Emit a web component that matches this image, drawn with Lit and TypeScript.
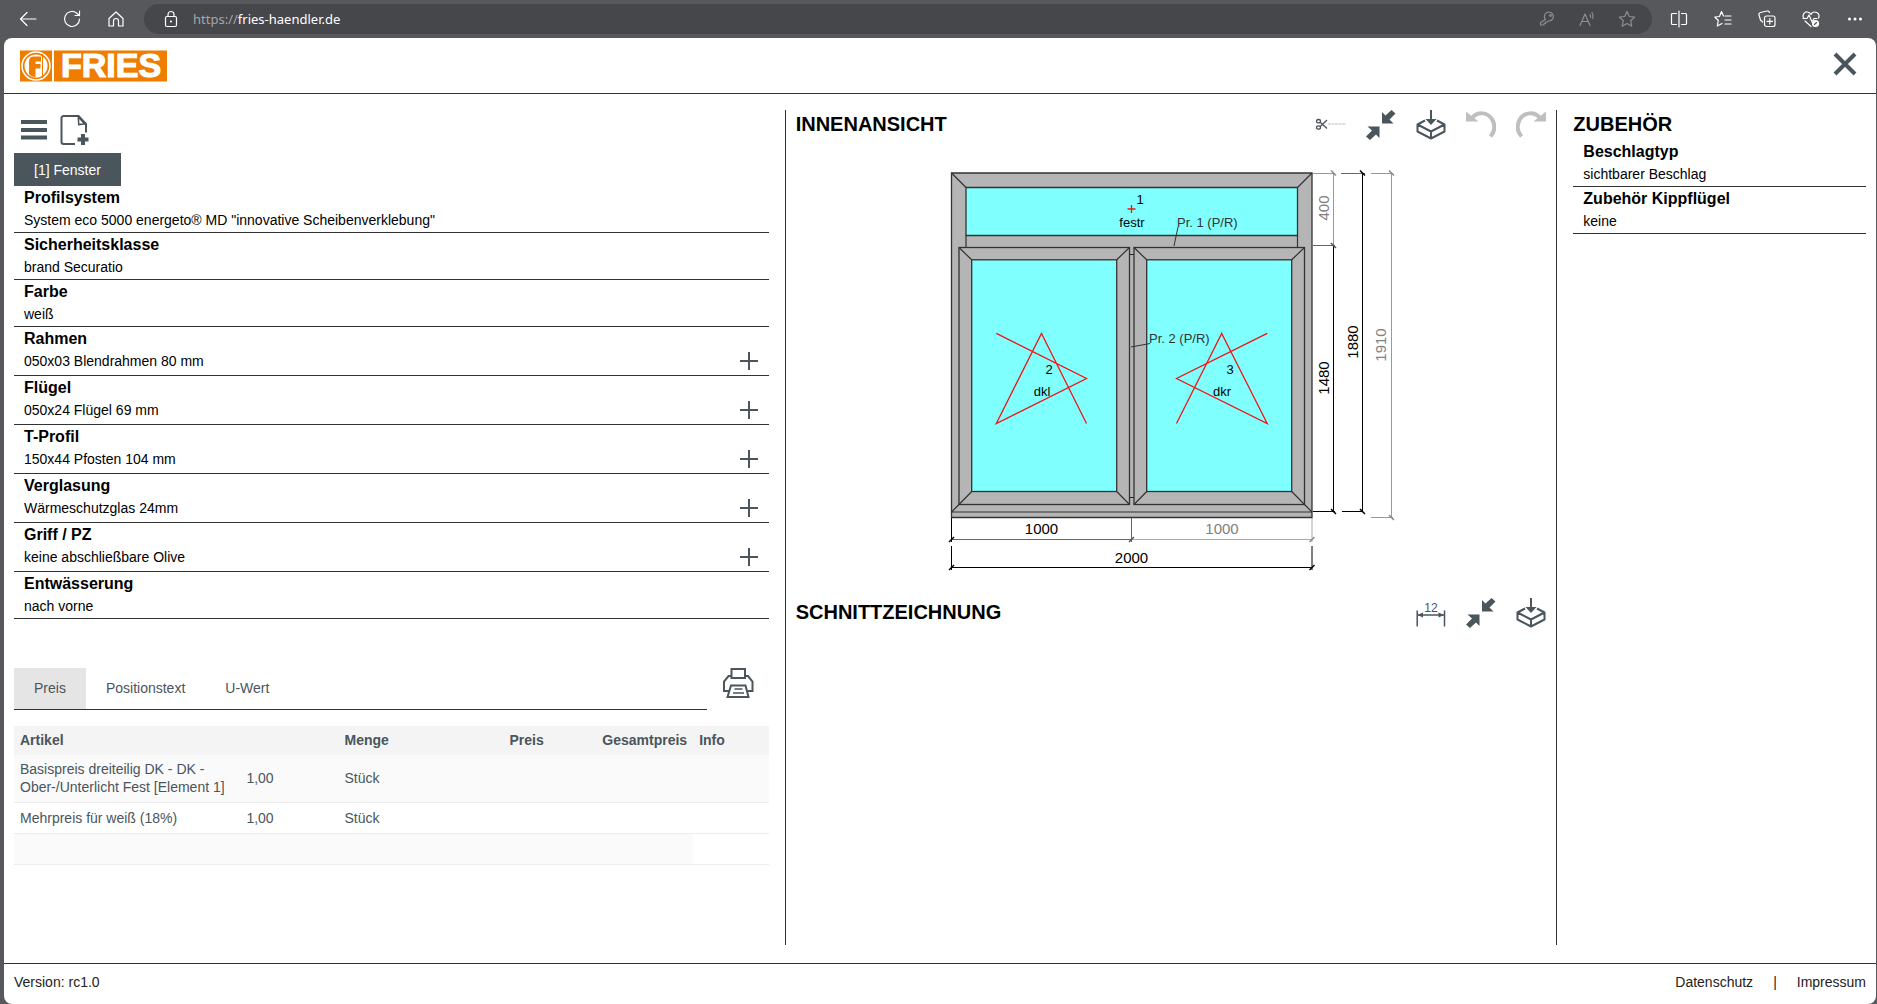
import { LitElement, html, css, svg } from "lit";
import { customElement, state } from "lit/decorators.js";

interface Setting {
  title: string;
  value: string;
  extendable?: boolean;
}

const PROFILE: Setting[] = [
  { title: "Profilsystem", value: 'System eco 5000 energeto® MD "innovative Scheibenverklebung"' },
  { title: "Sicherheitsklasse", value: "brand Securatio" },
  { title: "Farbe", value: "weiß" },
  { title: "Rahmen", value: "050x03 Blendrahmen 80 mm", extendable: true },
  { title: "Flügel", value: "050x24 Flügel 69 mm", extendable: true },
  { title: "T-Profil", value: "150x44 Pfosten 104 mm", extendable: true },
  { title: "Verglasung", value: "Wärmeschutzglas 24mm", extendable: true },
  { title: "Griff / PZ", value: "keine abschließbare Olive", extendable: true },
  { title: "Entwässerung", value: "nach vorne" },
];

const ACCESSORIES: Setting[] = [
  { title: "Beschlagtyp", value: "sichtbarer Beschlag" },
  { title: "Zubehör Kippflügel", value: "keine" },
];

const ITEMS = [
  { article: "Basispreis dreiteilig DK - DK - Ober-/Unterlicht Fest [Element 1]", count: "1,00", unit: "Stück" },
  { article: "Mehrpreis für weiß (18%)", count: "1,00", unit: "Stück" },
];

const ICON = "#4a555c";
const MUTED = "#bfbfbf";

const icon = (size: number, content: unknown) => html`
  <svg width=${size} height=${size} viewBox="0 0 ${size} ${size}" fill="none" aria-hidden="true">${content}</svg>
`;

const shrinkIcon = icon(30, svg`
  <path fill=${ICON} d="M16 13.500V2l3.500 3.500L25.500 0 29.500 3.500 23.500 9.500l4 4z"/>
  <path fill=${ICON} d="M13.500 16.500V28l-3.500-3.500L4 30 0 26.500 6 20.500l-4.500-4z"/>`);

const boxIcon = icon(30, svg`
  <path stroke=${ICON} stroke-width="2" stroke-linejoin="round" d="M9 10.500 1.500 14.500 15 21.500 28.500 14.500 21 10.500M1.500 14.500v7L15 28.500l13.500-7v-7M15 21.500v7"/>
  <path fill=${ICON} d="M14 0h2v9h4.500L15 15 9.500 9H14z"/>`);

const undoIcon = icon(30, svg`
  <path stroke=${MUTED} stroke-width="4" d="M6 8C12 1 22 2 26.500 10c3 6 2 12-2 16.500"/>
  <path fill=${MUTED} d="M0 1.500 12.500 11.500H0z"/>`);

const redoIcon = icon(30, svg`
  <path stroke=${MUTED} stroke-width="4" d="M24 8C18 1 8 2 3.500 10c-3 6-2 12 2 16.500"/>
  <path fill=${MUTED} d="M30 1.500 17.500 11.500H30z"/>`);

const scissorsIcon = icon(30, svg`
  <g stroke=${ICON} stroke-width="1.300">
    <ellipse cx="2.500" cy="11.200" rx="2" ry="1.700"/><ellipse cx="2.500" cy="17.500" rx="2" ry="1.700"/>
    <path d="M4.200 12.200 11 18.500M4.200 16.500 11 10"/>
  </g>
  <path stroke="#d3d5d7" stroke-width="1.500" stroke-dasharray="3 .5" d="M12 14h18"/>`);

const measureIcon = icon(30, svg`
  <path stroke=${ICON} stroke-width="1.500" d="M1.200 12.500v16M28.500 12.500v16M2 17h26"/>
  <path fill=${ICON} d="M1.500 17l5.500-2.500v5zM28 17 22.500 14.500v5z"/>
  <text x="15" y="14" text-anchor="middle" font-family="Liberation Sans, sans-serif" font-size="12" fill=${ICON}>12</text>`);

const plusIcon = icon(20, svg`<path stroke=${ICON} stroke-width="2" d="M1 10h18M10 1v18"/>`);

const menuIcon = icon(30, svg`<path stroke=${ICON} stroke-width="4" d="M1 7h26M1 15h26M1 22.500h26"/>`);

const newIcon = icon(32, svg`
  <path stroke=${ICON} stroke-width="2" stroke-linejoin="round" d="M17 30H5.500a2 2 0 0 1-2-2V4a2 2 0 0 1 2-2h15L28 10v8.500"/>
  <path fill=${ICON} d="M19.500 1.500 29 10.500l-9 1z"/>
  <path fill="#fff" d="M21.300 5v4.500h3.800z"/>
  <path stroke=${ICON} stroke-width="4" d="M19.500 25.500h11M25 20v11"/>`);

const printerIcon = icon(32, svg`
  <g stroke=${ICON} stroke-width="2">
    <path d="M9.500 10V1h13.500v9zM9.500 8H6.500L2 13.500V23h5M23 8h3l4.500 5.500V23h-5"/>
    <path d="M9 17.500h14.500l3 11.500H5.500z"/>
    <path d="M12.500 21h8M11 25h11" stroke-width="1.500"/>
  </g>`);

const closeIcon = icon(24, svg`<path stroke=${ICON} stroke-width="4" d="M2 2l20 20M22 2 2 22"/>`);

const line = (d: string, color: string, width = 1) => svg`<path d=${d} stroke=${color} stroke-width=${width}/>`;

@customElement("browser-bar")
class BrowserBar extends LitElement {
  static styles = css`
    :host {
      display: flex;
      align-items: center;
      height: 38px;
      padding-left: 6px;
      background: #57585c;
      color: #fff;
      font-family: "Noto Sans", "Open Sans", sans-serif;
    }
    button {
      display: flex;
      align-items: center;
      justify-content: center;
      width: 44px;
      height: 30px;
      padding: 0;
      border: 0;
      background: none;
      color: inherit;
    }
    .address {
      flex: 1;
      display: flex;
      align-items: center;
      height: 30px;
      margin: 0 5px 0 6px;
      padding: 0 5px 0 5px;
      border-radius: 15px;
      background: #46474b;
    }
    .url {
      flex: 1;
      font-size: 13px;
      line-height: 18px;
    }
    .scheme {
      color: #a5a6a8;
    }
    .address .tool {
      width: 40px;
      color: #8d8e91;
    }
    svg {
      stroke: currentColor;
      stroke-width: 1.2;
      stroke-linecap: round;
      stroke-linejoin: round;
    }
  `;

  render() {
    return html`
      <button aria-label="Zurück">${icon(18, svg`<path d="M17 9H1.500M8 2.500 1.500 9 8 15.500"/>`)}</button>
      <button aria-label="Neu laden">${icon(18, svg`<path d="M16.500 9A7.500 7.500 0 1 1 13.500 3l3 2.500M16.500 1v4.500H12"/>`)}</button>
      <button aria-label="Startseite">
        ${icon(18, svg`<path d="M2 8.500 9 2l7 6.500V16h-4.500v-5a2.500 2.500 0 0 0-5 0v5H2z"/>`)}
      </button>
      <div class="address">
        <button aria-label="Websiteinformationen">
          ${icon(18, svg`<rect x="3.500" y="6.500" width="11" height="10" rx="1.500"/><path d="M6 6.500V4.500a3 3 0 0 1 6 0v2"/><circle cx="9" cy="11.500" r=".5"/>`)}
        </button>
        <span class="url"><span class="scheme">https://</span>fries-haendler.de</span>
        <button class="tool" aria-label="Kennwort">
          ${icon(18, svg`<path d="M7.500 9.500A4.500 4.500 0 1 1 10.500 11L9 12H7.500v1.500H6V15H2.500v-2.500z"/><circle cx="12.500" cy="5.500" r=".8"/>`)}
        </button>
        <button class="tool" aria-label="Vorlesen">
          ${icon(18, svg`<path d="M2 15.500 7 4l5 11.500M3.800 11.500h6.400M12 4.500a4 4 0 0 1 .5 3M14 2.500a7 7 0 0 1 .8 6"/>`)}
        </button>
        <button class="tool" aria-label="Favorit">
          ${icon(18, svg`<path d="M9 1.500l2.300 5 5.400.6-4 3.700 1.100 5.400L9 13.500l-4.800 2.700 1.100-5.400-4-3.700 5.400-.6z"/>`)}
        </button>
      </div>
      <button aria-label="Geteilter Bildschirm">
        ${icon(18, svg`<path d="M6.500 3.500H2.500a1 1 0 0 0-1 1v9a1 1 0 0 0 1 1h4M11.500 3.500h4a1 1 0 0 1 1 1v9a1 1 0 0 1-1 1h-4M9 1v16"/>`)}
      </button>
      <button aria-label="Favoritenleiste">
        ${icon(18, svg`<path d="M9.500 6 7.500 1.500l-2 5-4.700.5 3.500 3.500-1 5.500L8 13.500M11 6h6M11 10h6M11 14h6"/>`)}
      </button>
      <button aria-label="Sammlungen">
        ${icon(18, svg`<rect x="6.500" y="6" width="10.500" height="10.500" rx="2"/><path d="M11.800 8.500v5.500M9 11.300h5.500M4.500 12 2.500 10 1 5a2 2 0 0 1 1.500-2.500L9 1a2 2 0 0 1 2.500 1.500"/>`)}
      </button>
      <button aria-label="Browser-Grundlagen">
        ${icon(18, svg`<path d="M1.500 8C0 4 3 1.500 5.500 2 8 2.300 9 4.500 9 4.500S10 2 12.500 2C16 2 18 5 16.500 8M3 11l6 5.500M1 8.500h4L7 5l3 7 2-3.500h3"/><circle cx="13.500" cy="13.500" r="3" fill="#fff"/><path d="M12.500 14.500l2-2" stroke="#57585c"/>`)}
      </button>
      <button aria-label="Einstellungen">
        ${icon(18, svg`<g fill="#fff" stroke="none"><circle cx="3.500" cy="9" r="1.500"/><circle cx="9" cy="9" r="1.500"/><circle cx="14.500" cy="9" r="1.500"/></g>`)}
      </button>
    `;
  }
}

@customElement("setting-list")
class SettingList extends LitElement {
  static properties = { items: { attribute: false } };
  declare items: Setting[];

  static styles = css`
    :host {
      display: block;
    }
    .row {
      display: flex;
      justify-content: space-between;
      align-items: flex-end;
      padding: 1px 10px;
      border-bottom: 1px solid #333;
    }
    .row.extendable {
      padding-bottom: 3px;
    }
    h3 {
      margin: 0;
      font-size: 16px;
      line-height: 22px;
      font-weight: bold;
    }
    p {
      margin: 0;
      font-size: 14px;
      line-height: 22px;
    }
    button {
      display: flex;
      padding: 0 0 1px;
      border: 0;
      background: none;
    }
  `;

  render() {
    return this.items.map(
      (item) => html`
        <div class="row ${item.extendable ? "extendable" : ""}">
          <div>
            <h3>${item.title}</h3>
            <p>${item.value}</p>
          </div>
          ${item.extendable ? html`<button aria-label="${item.title} erweitern">${plusIcon}</button>` : ""}
        </div>
      `
    );
  }
}

@customElement("window-drawing")
class WindowDrawing extends LitElement {
  static styles = css`
    :host {
      display: flex;
      justify-content: center;
    }
    svg {
      font-family: "Liberation Sans", Arial, sans-serif;
      font-size: 13px;
      text-anchor: middle;
    }
    .dim {
      font-family: "Liberation Sans Narrow", "Arial Narrow", "Liberation Sans", sans-serif;
      font-size: 15px;
    }
    .note {
      text-anchor: start;
      fill: #333;
    }
  `;

  private sash(x: number) {
    return svg`
      <g transform="translate(${x} 247.500)">
        <rect width="170.500" height="257" fill="#b5b5b5" stroke="#333" stroke-width="1.300"/>
        <rect x="12.700" y="12.300" width="145" height="231.700" fill="#80ffff" stroke="#333" stroke-width="1.300"/>
        <path d="M0 0l12.700 12.300M170.500 0l-12.800 12.300M0 257l12.700-13M170.500 257l-12.800-13" stroke="#333" stroke-width="1.200"/>
      </g>`;
  }

  private dimension(x: number, y: number, value: string, color: string, upright = false) {
    const turn = upright ? `rotate(-90 ${x} ${y})` : "";
    return svg`<text class="dim" x=${x} y=${y} fill=${color} transform=${turn}>${value}</text>`;
  }

  private tick(x: number, y: number, color: string, flip = false) {
    return line(flip ? `M${x - 2.5} ${y - 2.5}l5 5` : `M${x - 2.5} ${y + 2.5}l5-5`, color, 1.5);
  }

  render() {
    return html`
      <svg width="456" height="458" viewBox="943 140 456 458" fill="none" role="img" aria-label="Innenansicht">
        <path d="M951.500 173H1312v344.500H951.500z" fill="#b5b5b5" stroke="#333" stroke-width="1.300"/>
        <path d="M966 187.500h331.500v48H966z" fill="#80ffff" stroke="#333" stroke-width="1.300"/>
        ${line("M951.5 512H1312M966 235v13M1297.500 235v13", "#333", 1.2)}
        ${line("M951.5 173l14.500 14.500M1312 173l-14.500 14.500M951.500 512l8-8M1312 512l-8-8", "#333", 1.2)}
        ${line("M1129 254.500h5M1129 497.500h5", "#222")}
        ${this.sash(959)} ${this.sash(1134)}

        <g stroke="#f01414" stroke-width="1.300">
          <path d="M1127.500 209h8M1131.500 205v8"/>
          <path d="M996.300 333.300l90.200 45.200-90.200 45 45.200-90 45 90"/>
          <path d="M1267.200 333.300l-90.700 45.200 90.700 45-45.500-90-45.200 90"/>
        </g>

        <g fill="#000">
          <text x="1140" y="204">1</text>
          <text x="1132" y="227">festr</text>
          <text x="1049" y="374">2</text>
          <text x="1042" y="396">dkl</text>
          <text x="1230" y="374">3</text>
          <text x="1222" y="396">dkr</text>
        </g>
        <text class="note" x="1177" y="227">Pr. 1 (P/R)</text>
        <text class="note" x="1149" y="343">Pr. 2 (P/R)</text>
        ${line("M1178 227l-4 19M1150 343.500l-19 3.500", "#333")}

        ${line("M1313 173.500h22M1333.500 173v72", "#999")}
        ${line("M1313 245.500h22", "#666")}
        ${line("M1333.500 245v266.500M1313 511.500h22M1342 511.500h21M1362.500 173v339", "#000")}
        ${line("M1341 173.500h24", "#666")}
        ${line("M1371 173.500h22M1371 517.500h22M1391.500 173v344", "#999")}
        ${this.tick(1333.5, 173, "#888", true)} ${this.tick(1333.5, 245.5, "#555", true)}
        ${this.tick(1333.5, 511.5, "#000", true)} ${this.tick(1362.5, 173, "#000", true)}
        ${this.tick(1362.5, 511.5, "#000", true)} ${this.tick(1391.5, 173, "#888", true)}
        ${this.tick(1391.5, 517.5, "#888", true)}
        ${this.dimension(1329, 208, "400", "#808080", true)}
        ${this.dimension(1329, 378, "1480", "#000", true)}
        ${this.dimension(1358, 342, "1880", "#000", true)}
        ${this.dimension(1386, 345, "1910", "#808080", true)}

        ${line("M1131.5 539.500H1312M1312 518v24", "#aaa")}
        ${line("M951.5 539.500h180M1131.500 518v24", "#666")}
        ${line("M951.5 518v24M951.500 546v24M951.500 567.500H1312M1312 546v24", "#000")}
        ${this.tick(951.5, 539.5, "#000")} ${this.tick(1131.5, 539.5, "#555")} ${this.tick(1312, 539.5, "#888")}
        ${this.tick(951.5, 567.5, "#000")} ${this.tick(1312, 567.5, "#000")}
        ${this.dimension(1041.5, 534, "1000", "#000")}
        ${this.dimension(1222, 534, "1000", "#808080")}
        ${this.dimension(1131.5, 563, "2000", "#000")}
      </svg>
    `;
  }
}

@customElement("app-root")
class AppRoot extends LitElement {
  @state() private tab = "Preis";

  static styles = css`
    :host {
      display: flex;
      flex-direction: column;
      min-height: 100vh;
      background: #57585c;
      color: #000;
      font-family: "Liberation Sans", Arial, sans-serif;
      font-size: 14px;
      line-height: 18px;
    }
    button {
      display: flex;
      padding: 0;
      border: 0;
      background: none;
      font: inherit;
      color: inherit;
    }
    h2 {
      margin: 0;
      padding-bottom: 1px;
      font-size: 20px;
      line-height: 29px;
    }
    .page {
      flex: 1;
      display: flex;
      flex-direction: column;
      margin: 0 1px 0 4px;
      border-radius: 8px;
      background: #fff;
    }
    .header {
      display: flex;
      justify-content: space-between;
      align-items: flex-start;
      height: 55px;
      padding: 0 19px 0 16px;
      border-bottom: 1px solid #333;
    }
    .logo {
      padding-top: 8px;
    }
    .logo svg {
      display: block;
    }
    .close {
      padding-top: 14px;
    }
    .content {
      flex: 1;
      display: grid;
      grid-template-columns: 5fr 5fr 2fr;
      padding: 16px 10px 18px;
    }
    .config {
      padding-right: 16px;
      border-right: 1px solid #333;
    }
    .views {
      padding: 0 10px;
      border-right: 1px solid #333;
    }
    .extras {
      padding-left: 16px;
    }
    .actions {
      display: flex;
      align-items: center;
      gap: 8px;
      height: 43px;
      padding: 0 6px 4px;
      box-sizing: border-box;
    }
    .element {
      padding: 8px 20px 7px;
      background: #4a555c;
      color: #fff;
    }
    .details {
      display: flex;
      margin-top: 49px;
    }
    .tabs {
      flex: 1;
      display: flex;
      border-bottom: 1px solid #333;
    }
    .tab {
      padding: 11px 20px 12px;
      color: #4a555c;
    }
    .tab.active {
      background: #e5e5e5;
    }
    .print {
      align-self: flex-start;
      margin: 0 15px 0 15px;
    }
    table {
      width: 100%;
      margin-top: 16px;
      border-collapse: collapse;
      table-layout: fixed;
      color: #4a555c;
    }
    th,
    td {
      box-sizing: border-box;
      padding: 5px 6px 6px;
      text-align: left;
    }
    thead {
      background: #f4f4f4;
    }
    td {
      height: 31px;
      border-bottom: 1px solid #ececec;
    }
    td:first-child {
      padding-right: 10px;
    }
    tbody tr:nth-child(odd) {
      background: #fafafa;
    }
    tbody .rest {
      background: #fff;
    }
    .right {
      text-align: right;
    }
    .name {
      width: 30%;
    }
    .number,
    .unit {
      width: 13%;
    }
    .price {
      width: 15%;
    }
    .total {
      width: 19%;
    }
    .view-head {
      display: flex;
      justify-content: space-between;
    }
    .tools {
      display: flex;
      gap: 20px;
    }
    .footer {
      display: flex;
      justify-content: space-between;
      padding: 9px 10px 13px;
      border-top: 1px solid #333;
      color: #222;
    }
    .links {
      display: flex;
      gap: 20px;
    }
    .footer a {
      color: inherit;
      text-decoration: none;
    }
  `;

  render() {
    return html`
      <browser-bar></browser-bar>
      <div class="page">
        <header class="header">
          <div class="logo">
            <svg width="148" height="40" viewBox="0 -4 148 40" role="img" aria-label="FRIES">
              <path fill="#ef7d00" d="M0 .500h32v31H0zM34 .500h113v31H34z" />
              <circle cx="16" cy="16" r="14" fill="none" stroke="#fff" stroke-width="1.500" />
              <circle cx="16" cy="16" r="11.500" fill="#fff" />
              <path fill="#ef7d00" d="M9 24V11.500q0-5 5-5h7v5h-5.500v2.500h5v4.500h-5V27q-4.500 0-6.500-3z" />
              <path stroke="#ef7d00" d="M22.500 4v24" />
              <text x="91" y="27" text-anchor="middle" fill="#fff" stroke="#fff" stroke-width="1.200" font-family="Liberation Sans" font-weight="bold" font-size="34">FRIES</text>
            </svg>
          </div>
          <button class="close" aria-label="Schließen">${closeIcon}</button>
        </header>

        <main class="content">
          <section class="config">
            <div class="actions">
              <button aria-label="Menü">${menuIcon}</button>
              <button aria-label="Neues Element">${newIcon}</button>
            </div>
            <button class="element">[1] Fenster</button>
            <setting-list .items=${PROFILE}></setting-list>

            <div class="details">
              <nav class="tabs">
                ${["Preis", "Positionstext", "U-Wert"].map(
                  (name) => html`
                    <button class="tab ${name === this.tab ? "active" : ""}" @click=${() => (this.tab = name)}>${name}</button>
                  `
                )}
              </nav>
              <button class="print" aria-label="Drucken">${printerIcon}</button>
            </div>

            <table>
              <thead>
                <tr>
                  <th class="name">Artikel</th>
                  <th class="number"></th>
                  <th class="unit">Menge</th>
                  <th class="price right">Preis</th>
                  <th class="total right">Gesamtpreis</th>
                  <th>Info</th>
                </tr>
              </thead>
              <tbody>
                ${ITEMS.map(
                  (item) => html`
                    <tr>
                      <td>${item.article}</td>
                      <td>${item.count}</td>
                      <td>${item.unit}</td>
                      <td></td>
                      <td></td>
                      <td></td>
                    </tr>
                  `
                )}
                <tr>
                  <td colspan="5"></td>
                  <td class="rest"></td>
                </tr>
              </tbody>
            </table>
          </section>

          <section class="views">
            <div class="view-head">
              <h2>INNENANSICHT</h2>
              <div class="tools">
                <button aria-label="Schnitt">${scissorsIcon}</button>
                <button aria-label="Einpassen">${shrinkIcon}</button>
                <button aria-label="3D-Ansicht">${boxIcon}</button>
                <button aria-label="Rückgängig">${undoIcon}</button>
                <button aria-label="Wiederholen">${redoIcon}</button>
              </div>
            </div>
            <window-drawing></window-drawing>
            <div class="view-head">
              <h2>SCHNITTZEICHNUNG</h2>
              <div class="tools">
                <button aria-label="Bemaßung">${measureIcon}</button>
                <button aria-label="Schnitt einpassen">${shrinkIcon}</button>
                <button aria-label="Schnitt ablegen">${boxIcon}</button>
              </div>
            </div>
          </section>

          <section class="extras">
            <h2>ZUBEHÖR</h2>
            <setting-list .items=${ACCESSORIES}></setting-list>
          </section>
        </main>

        <footer class="footer">
          <span>Version: rc1.0</span>
          <div class="links">
            <a href="#datenschutz">Datenschutz</a>
            <span>|</span>
            <a href="#impressum">Impressum</a>
          </div>
        </footer>
      </div>
    `;
  }
}
